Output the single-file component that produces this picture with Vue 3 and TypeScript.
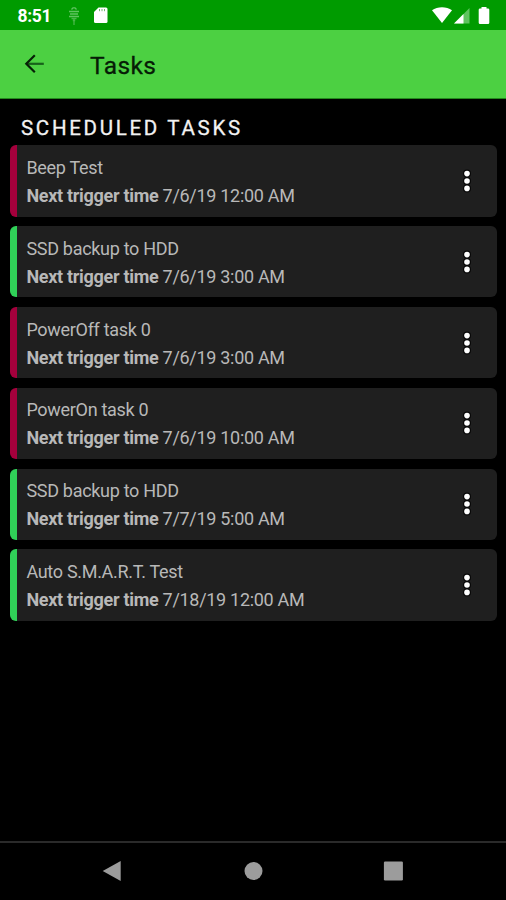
<script setup lang="ts">
interface Task {
  id: number
  name: string
  next: string
  enabled: boolean
}

const tasks: Task[] = [
  { id: 1, name: 'Beep Test', next: '7/6/19 12:00 AM', enabled: false },
  { id: 2, name: 'SSD backup to HDD', next: '7/6/19 3:00 AM', enabled: true },
  { id: 3, name: 'PowerOff task 0', next: '7/6/19 3:00 AM', enabled: false },
  { id: 4, name: 'PowerOn task 0', next: '7/6/19 10:00 AM', enabled: false },
  { id: 5, name: 'SSD backup to HDD', next: '7/7/19 5:00 AM', enabled: true },
  { id: 6, name: 'Auto S.M.A.R.T. Test', next: '7/18/19 12:00 AM', enabled: true },
]
</script>

<template>
  <div class="screen">
    <header class="status">
      <span class="clock">8:51</span>
      <svg class="debug" width="12" height="20" viewBox="0 0 12 20">
        <path d="M3.500 3.500L5 1.800h2l1.500 1.700M1 5.500h10M2 8h8M1 10.500h10" />
        <path class="stem" d="M3.500 12.500h5M6 12.500v6.500M4.800 14.500h2.400" />
      </svg>
      <svg class="sd" width="14" height="17" viewBox="0 0 14 17">
        <path class="solid" d="M4.500 .5H12a1.500 1.500 0 0 1 1.500 1.500v12.500A1.500 1.500 0 0 1 12 16H1.500A1.500 1.500 0 0 1 0 14.500V5z" />
        <path class="slots" d="M5.500 2v2.200M8 2v2.200M10.500 2v2.200" />
      </svg>
      <span class="spacer"></span>
      <svg class="wifi" width="20" height="17" viewBox="0 0 20 17">
        <path class="solid" d="M0 3.200C5.500-.9 14.500-.9 20 3.200L10 16z" />
      </svg>
      <svg class="signal" width="16" height="16" viewBox="0 0 16 16">
        <path class="faint" d="M15.500 0v15.500H0z" />
        <path class="solid" d="M9.500 6v9.500H0z" />
      </svg>
      <svg class="battery" width="12" height="18" viewBox="0 0 12 18">
        <path class="solid" d="M3.500 0h5v1.500H10a1.300 1.300 0 0 1 1.300 1.300v12.900A1.300 1.300 0 0 1 10 17H2A1.300 1.300 0 0 1 .7 15.700V2.800A1.300 1.300 0 0 1 2 1.500h1.500z" />
      </svg>
    </header>

    <div class="toolbar">
      <button class="back" aria-label="Back">
        <svg width="20" height="20" viewBox="0 0 20 20">
          <path class="shaft" d="M19.800 9.800H2" />
          <path d="M10.800 1.300L2.300 9.800l8.500 8.500" />
        </svg>
      </button>
      <h1 class="title">Tasks</h1>
    </div>

    <main class="content">
      <h2 class="heading">SCHEDULED TASKS</h2>
      <ul class="list">
        <li v-for="task in tasks" :key="task.id" class="card" :class="{ enabled: task.enabled }">
          <div class="body">
            <div class="line name">{{ task.name }}</div>
            <div class="line"><b class="label">Next trigger time</b> {{ task.next }}</div>
          </div>
          <button class="more" aria-label="More options">
            <svg width="10" height="24" viewBox="0 0 10 24">
              <g class="halo">
                <circle cx="5" cy="4.600" r="4" />
                <circle cx="5" cy="12" r="4" />
                <circle cx="5" cy="19.400" r="4" />
              </g>
              <circle cx="5" cy="4.600" r="2.800" />
              <circle cx="5" cy="12" r="2.800" />
              <circle cx="5" cy="19.400" r="2.800" />
            </svg>
          </button>
        </li>
      </ul>
    </main>

    <nav class="navbar">
      <svg width="20" height="22" viewBox="0 0 20 22">
        <path d="M18.700 1v20L.7 11z" />
      </svg>
      <svg width="20" height="22" viewBox="0 0 20 22">
        <circle cx="10.500" cy="11" r="9" />
      </svg>
      <svg width="20" height="22" viewBox="0 0 20 22">
        <rect x=".9" y="1.500" width="19" height="19" rx="1.200" />
      </svg>
    </nav>
  </div>
</template>

<style>
body {
  margin: 0;
  background: #000;
}
</style>

<style scoped>
.screen {
  display: flex;
  flex-direction: column;
  box-sizing: border-box;
  height: 900px;
  background: #000;
  font-family: Roboto, "Liberation Sans", sans-serif;
  overflow: hidden;
}
svg {
  display: block;
  flex: none;
}
button {
  padding: 0;
  border: 0;
  background: none;
}
.status {
  display: flex;
  align-items: center;
  flex: none;
  box-sizing: border-box;
  height: 30px;
  padding: 1px 16px 0 17.500px;
  background: #009b00;
}
.clock {
  width: 50px;
  color: #fff;
  font-size: 17.500px;
  font-weight: 700;
  line-height: 30px;
  letter-spacing: -.3px;
}
.debug {
  fill: none;
  stroke: #5fc35f;
  stroke-width: 1.300;
}
.debug .stem {
  stroke: #49b749;
}
.sd {
  margin-left: 14.500px;
}
.solid {
  fill: #fff;
}
.faint {
  fill: #5fc35f;
}
.slots {
  stroke: #70b870;
  stroke-width: 1;
}
.spacer {
  flex: 1;
}
.wifi {
  margin-top: -1px;
}
.signal {
  margin: 0 8px 0 2px;
}
.toolbar {
  display: flex;
  align-items: center;
  flex: none;
  box-sizing: border-box;
  height: 69px;
  padding: 0 24px 0;
  background: #4cd042;
  border-bottom: 1px solid #238a1c;
}
.back svg {
  fill: none;
  stroke: #062006;
  stroke-width: 2.200;
}
.back .shaft {
  stroke: #17611a;
}
.title {
  margin: 2px 0 0 46px;
  color: #061c06;
  font-size: 24.500px;
  font-weight: 400;
  letter-spacing: .4px;
  -webkit-text-stroke: .3px #061c06;
}
.content {
  flex: 1;
  padding: 17px 9px 0 10px;
}
.heading {
  margin: 0;
  padding-left: 11px;
  color: #f2f2f2;
  font-size: 20.500px;
  font-weight: 400;
  line-height: 24px;
  letter-spacing: 2.700px;
  -webkit-text-stroke: .3px #f2f2f2;
}
.list {
  display: flex;
  flex-direction: column;
  gap: 9.300px;
  margin: 5px 0 0;
  padding: 0;
  list-style: none;
}
.card {
  display: flex;
  box-sizing: border-box;
  height: 71.600px;
  padding-right: 25px;
  justify-content: space-between;
  align-items: center;
  border-left: 7.500px solid #a4003c;
  border-radius: 6px;
  background: #1f1f1f;
}
.card.enabled {
  border-left-color: #30d158;
}
.body {
  padding: 2px 0 0 9.400px;
}
.line {
  color: #b8b8b8;
  font-size: 18px;
  line-height: 28px;
  letter-spacing: -.3px;
  white-space: nowrap;
}
.label {
  font-weight: 700;
}
.more svg {
  fill: #fff;
}
.more .halo {
  fill: #080808;
}
.navbar {
  display: flex;
  align-items: center;
  justify-content: space-between;
  flex: none;
  box-sizing: border-box;
  height: 59px;
  padding: 0 103px 2px 102px;
  border-top: 2px solid #2a2a2a;
}
.navbar svg {
  fill: #9c9c9c;
}
</style>
